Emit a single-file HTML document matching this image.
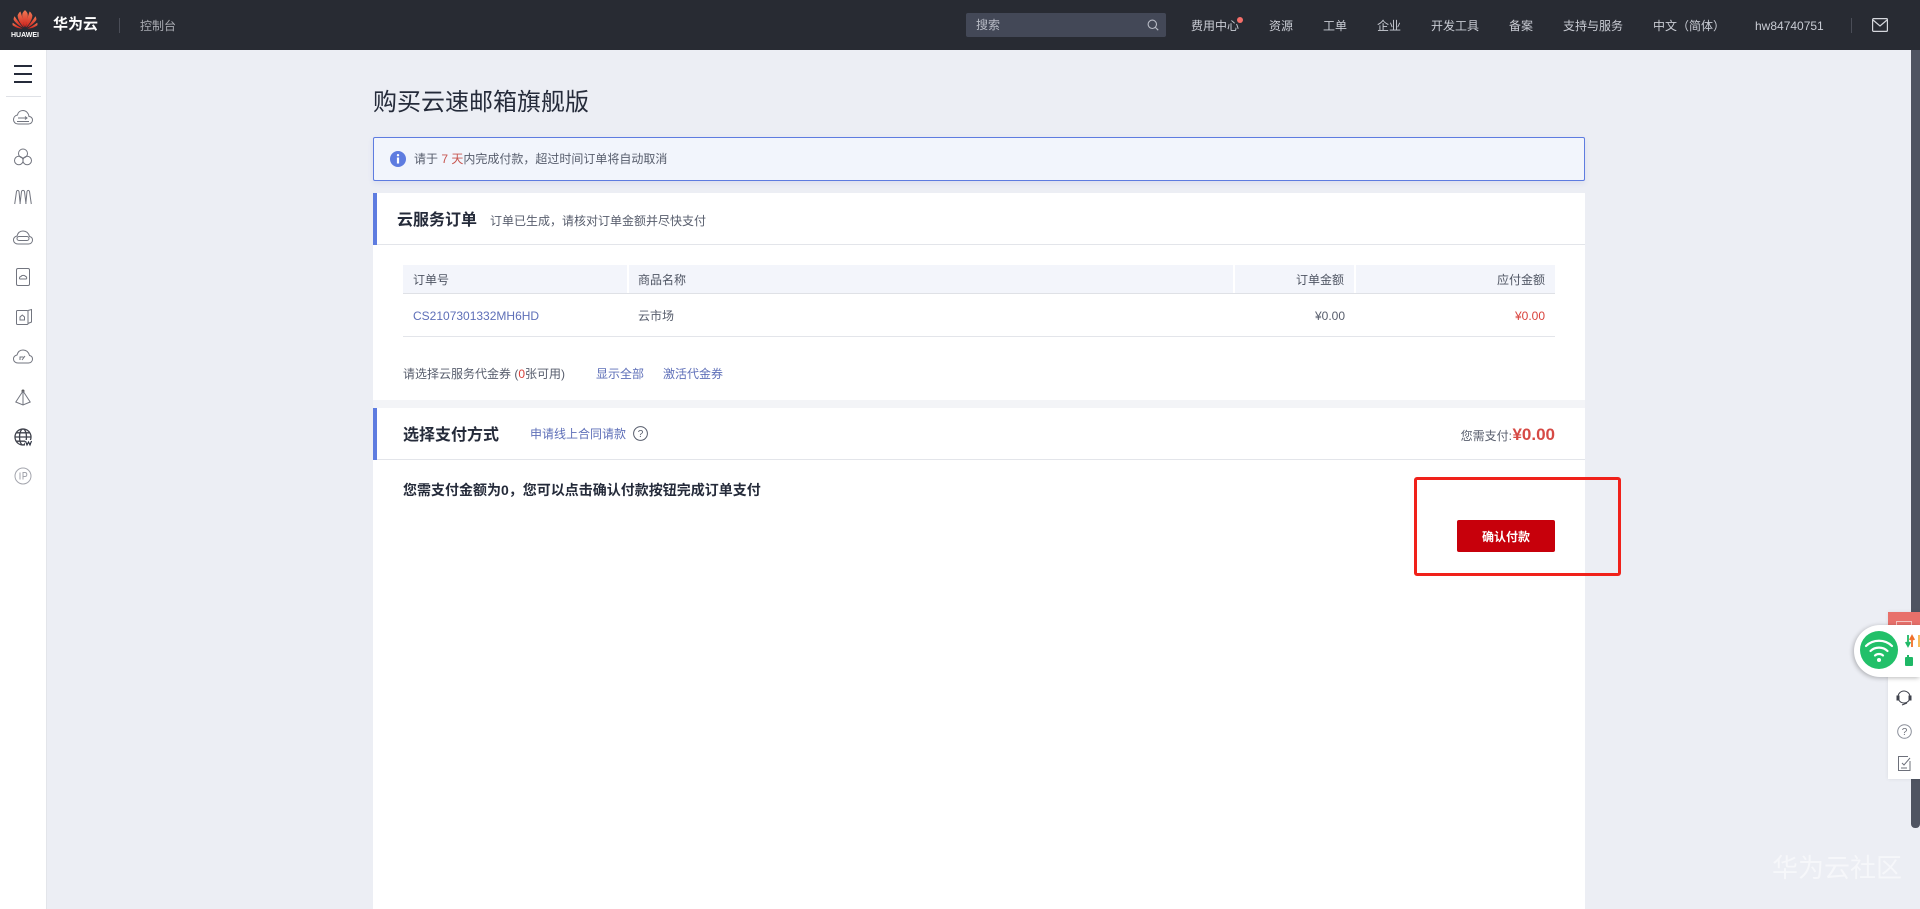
<!DOCTYPE html>
<html lang="zh-CN">
<head>
<meta charset="utf-8">
<title>购买云速邮箱旗舰版</title>
<style>
*{box-sizing:border-box;margin:0;padding:0}
html,body{width:1920px;height:909px;overflow:hidden;background:#eceef4}
body{position:relative;font-family:"Liberation Sans","Noto Sans CJK SC",sans-serif;font-size:12px;color:#252b3a}
.a{position:absolute;white-space:nowrap}
.c{line-height:20px;height:20px}
.nav{position:absolute;top:16px;line-height:20px;color:#c9ccd4;font-size:12px;white-space:nowrap}
.link{color:#5e6fb8}
svg{position:absolute;overflow:visible}
.ic{fill:none;stroke:#72757f;stroke-width:1}
</style>
</head>
<body>
<!-- header -->
<div class="a" style="left:0;top:0;width:1920px;height:50px;background:#282b33"></div>
<svg style="left:12px;top:9px" width="26" height="21" viewBox="0 0 26 21">
<defs><linearGradient id="g" x1="0" y1="0" x2="0" y2="1"><stop offset="0" stop-color="#f07a55"/><stop offset="1" stop-color="#cf1f1a"/></linearGradient></defs>
<g fill="url(#g)">
<path d="M13 18.500C11 14 9.600 8.500 10.400 4.500 11.200 2.600 12.300 1.600 13 1.200 13.700 1.600 14.800 2.600 15.600 4.500 16.400 8.500 15 14 13 18.500Z"/>
<path d="M12 18.500C8.500 15 5.800 10.500 5.600 6.500 6.300 4.600 7.400 3 8.400 2.500 10 6.500 11.500 13 12 18.500Z"/>
<path d="M14 18.500C17.500 15 20.200 10.500 20.400 6.500 19.700 4.600 18.600 3 17.600 2.500 16 6.500 14.500 13 14 18.500Z"/>
<path d="M11 18.800C7.500 17 3.500 14.200 1.600 10.800 1.500 9.400 2 8 2.600 7.200 5 11 8.500 15.500 11 18.800Z"/>
<path d="M15 18.800C18.500 17 22.500 14.200 24.400 10.800 24.500 9.400 24 8 23.400 7.200 21 11 17.500 15.500 15 18.800Z"/>
<path d="M10.500 19.600C7 19.400 3.300 18.400.6 16.200.4 15.400.5 14.400.8 13.800 3.800 16 7.500 18.200 10.500 19.600Z"/>
<path d="M15.500 19.600C19 19.400 22.700 18.400 25.400 16.200 25.600 15.400 25.500 14.400 25.200 13.800 22.200 16 18.500 18.200 15.500 19.600Z"/>
</g>
</svg>
<div class="a" style="left:11px;top:31px;width:28px;text-align:center;color:#fff;font-size:7px;line-height:9px;font-weight:bold">HUAWEI</div>
<div class="a" style="left:53px;top:14px;color:#fff;font-size:15px;line-height:22px;font-weight:bold">华为云</div>
<div class="a" style="left:119px;top:18px;width:1px;height:15px;background:#4a4d57"></div>
<div class="a" style="left:140px;top:16px;color:#a9abb2;font-size:12px;line-height:20px">控制台</div>
<div class="a" style="left:966px;top:13px;width:200px;height:24px;background:#434857;border-radius:2px"></div>
<div class="a" style="left:976px;top:15px;color:#b9bcc6;font-size:12px;line-height:20px">搜索</div>
<svg style="left:1147px;top:19px" width="12" height="12" viewBox="0 0 12 12" fill="none" stroke="#b9bcc6" stroke-width="1.1"><circle cx="5.300" cy="5.300" r="4.200"/><path d="M8.400 8.400 11.200 11.200"/></svg>
<div class="nav" style="left:1191px">费用中心</div>
<div class="a" style="left:1237px;top:17px;width:6px;height:6px;border-radius:50%;background:#f66f6a"></div>
<div class="nav" style="left:1269px">资源</div>
<div class="nav" style="left:1323px">工单</div>
<div class="nav" style="left:1377px">企业</div>
<div class="nav" style="left:1431px">开发工具</div>
<div class="nav" style="left:1509px">备案</div>
<div class="nav" style="left:1563px">支持与服务</div>
<div class="nav" style="left:1653px">中文（简体）</div>
<div class="nav" style="left:1755px">hw84740751</div>
<div class="a" style="left:1851px;top:18px;width:1px;height:15px;background:#4a4d57"></div>
<svg style="left:1872px;top:18px" width="16" height="14" viewBox="0 0 16 14" fill="none" stroke="#d5d7dd" stroke-width="1.2"><rect x=".6" y=".6" width="14.800" height="12.800" rx="1"/><path d="M1 2 8 8 15 2"/></svg>

<!-- sidebar -->
<div class="a" style="left:0;top:50px;width:47px;height:859px;background:#fff;border-right:1px solid #e3e5ea"></div>
<div class="a" style="left:14px;top:65px;width:18px;height:2px;background:#252b3a"></div>
<div class="a" style="left:14px;top:73px;width:18px;height:2px;background:#252b3a"></div>
<div class="a" style="left:14px;top:81px;width:18px;height:2px;background:#252b3a"></div>
<div class="a" style="left:6px;top:96px;width:35px;height:1px;background:#dfe1e6"></div>
<svg style="left:13px;top:109px" width="20" height="16" viewBox="0 0 20 16"><path class="ic" d="M5 15H15.500C18 15 19.500 13 19.500 11 19.500 9 18 7.500 16 7.500 15.500 4 13 1.500 10 1.500 7 1.500 5 3.500 4.500 6 2 6.500.5 8.500.5 10.700.5 13 2.500 15 5 15Z"/><path class="ic" d="M5 9H14M12 7.500 14 9 12 10.500M4 12.500H16"/></svg>
<svg style="left:14px;top:148px" width="18" height="18" viewBox="0 0 18 18"><g class="ic"><circle cx="9" cy="5.500" r="4.500"/><circle cx="4.800" cy="12.500" r="4.300"/><circle cx="13.200" cy="12.500" r="4.300"/></g></svg>
<svg style="left:14px;top:189px" width="18" height="16" viewBox="0 0 18 16"><path class="ic" d="M.7 15 2.500 2.500C3 1 4.500 1 5 2.500L6.200 15M6 15 7.500 2.500C8 1 10 1 10.500 2.500L12 15M11.800 15 13 2.500C13.500 1 15 1 15.500 2.500L17.300 15"/></svg>
<svg style="left:13px;top:230px" width="20" height="15" viewBox="0 0 20 15"><path class="ic" d="M5 14H15.500C18 14 19.500 12.200 19.500 10 19.500 8 18 6.800 16.500 6.500 15.500 3 13 1 10 1 7 1 4.800 3 4 6 2 6.500.5 8 .5 10 .5 12.300 2.500 14 5 14Z"/><rect class="ic" x="4" y="6.500" width="12" height="4" rx="2"/></svg>
<svg style="left:16px;top:268px" width="14" height="18" viewBox="0 0 14 18"><rect class="ic" x=".5" y=".5" width="13" height="17" rx="1.500"/><path class="ic" d="M4 11H10C11 11 11 8.500 9.500 8.500 9 7 5.500 7 5 8.500 3.500 8.500 3 11 4 11Z"/></svg>
<svg style="left:16px;top:309px" width="16" height="16" viewBox="0 0 16 16"><path class="ic" d="M12 1.500 15.500.5V13L12 14.500"/><rect class="ic" x=".5" y="1.500" width="11.500" height="14" rx="1"/><path class="ic" d="M4 11H8.500V8L6.300 6 4 8Z"/></svg>
<svg style="left:13px;top:349px" width="20" height="15" viewBox="0 0 20 15"><path class="ic" d="M5 14H15.500C18 14 19.500 12.200 19.500 10 19.500 8 18 6.800 16.500 6.500 15.500 3 13 1 10 1 7 1 4.800 3 4 6 2 6.500.5 8 .5 10 .5 12.300 2.500 14 5 14Z"/><path class="ic" d="M7 11V8H10.500M9 11 12 7"/></svg>
<svg style="left:15px;top:389px" width="16" height="17" viewBox="0 0 16 17"><circle cx="8" cy="2" r="1.500" fill="#555"/><path class="ic" d="M8 2 .8 13 8 16 15.200 13ZM8 2V16"/></svg>
<svg style="left:14px;top:428px" width="18" height="18" viewBox="0 0 18 18"><g fill="none" stroke="#3f424c" stroke-width="1.300"><circle cx="9" cy="9" r="8"/><ellipse cx="9" cy="9" rx="3.500" ry="8"/><path d="M1 9H17M2.500 4.800H15.500M2.500 13.200H15.500"/></g><rect x="11" y="12" width="7" height="6" fill="#fff"/><path d="M11.500 13 13 17 14.500 14 16 17 17.500 13" fill="none" stroke="#252b3a" stroke-width="1.100"/></svg>
<svg style="left:14px;top:467px" width="18" height="18" viewBox="0 0 18 18"><circle class="ic" style="stroke:#a3a5ad" cx="9" cy="9" r="8"/><path class="ic" style="stroke:#a3a5ad" d="M6 5.500V12.500M9 12.500V5.500H11C13.400 5.500 13.400 9.500 11 9.500H9"/></svg>

<!-- title -->
<div class="a" style="left:373px;top:85px;font-size:24px;line-height:36px;color:#252b3a">购买云速邮箱旗舰版</div>

<!-- alert -->
<div class="a" style="left:373px;top:137px;width:1212px;height:44px;background:#f2f5fc;border:1px solid #5e7ce0;border-radius:2px;box-shadow:0 2px 6px rgba(90,110,200,.12)"></div>
<svg style="left:390px;top:151px" width="16" height="16" viewBox="0 0 16 16"><circle cx="8" cy="8" r="8" fill="#5e7ce0"/><circle cx="8" cy="4.200" r="1.200" fill="#fff"/><rect x="6.900" y="6.500" width="2.200" height="6" fill="#fff"/></svg>
<div class="a c" style="left:414px;top:149px;color:#575d6c">请于 <span style="color:#c7554f">7 天</span>内完成付款，超过时间订单将自动取消</div>

<!-- main card -->
<div class="a" style="left:373px;top:193px;width:1212px;height:716px;background:#fff"></div>
<div class="a" style="left:373px;top:193px;width:4px;height:52px;background:#5e7ce0"></div>
<div class="a" style="left:377px;top:244px;width:1208px;height:1px;background:#e3e5ea"></div>
<div class="a" style="left:397px;top:209px;font-size:16px;line-height:24px;font-weight:bold;color:#252b3a">云服务订单</div>
<div class="a c" style="left:490px;top:211px;color:#575d6c">订单已生成，请核对订单金额并尽快支付</div>

<!-- table -->
<div class="a" style="left:403px;top:265px;width:1152px;height:29px;background:#f3f5fb;border-bottom:1px solid #dfe1e6"></div>
<div class="a" style="left:627px;top:265px;width:2px;height:28px;background:#fff"></div>
<div class="a" style="left:1233px;top:265px;width:2px;height:28px;background:#fff"></div>
<div class="a" style="left:1354px;top:265px;width:2px;height:28px;background:#fff"></div>
<div class="a c" style="left:413px;top:270px;color:#4f5563">订单号</div>
<div class="a c" style="left:638px;top:270px;color:#4f5563">商品名称</div>
<div class="a c" style="right:576px;top:270px;color:#4f5563">订单金额</div>
<div class="a c" style="right:375px;top:270px;color:#4f5563">应付金额</div>
<div class="a c link" style="left:413px;top:306px">CS2107301332MH6HD</div>
<div class="a c" style="left:638px;top:306px;color:#575d6c">云市场</div>
<div class="a c" style="right:575px;top:306px;color:#575d6c">¥0.00</div>
<div class="a c" style="right:375px;top:306px;color:#d9423c">¥0.00</div>
<div class="a" style="left:403px;top:336px;width:1152px;height:1px;background:#e3e5ea"></div>

<div class="a c" style="left:403px;top:364px;color:#575d6c">请选择云服务代金券 (<span style="color:#d9423c">0</span>张可用)</div>
<div class="a c link" style="left:596px;top:364px">显示全部</div>
<div class="a c link" style="left:663px;top:364px">激活代金券</div>

<!-- gap -->
<div class="a" style="left:373px;top:400px;width:1212px;height:8px;background:#f3f4f7"></div>

<!-- payment section -->
<div class="a" style="left:373px;top:408px;width:4px;height:52px;background:#5e7ce0"></div>
<div class="a" style="left:377px;top:459px;width:1208px;height:1px;background:#e3e5ea"></div>
<div class="a" style="left:403px;top:424px;font-size:16px;line-height:24px;font-weight:bold;color:#252b3a">选择支付方式</div>
<div class="a c link" style="left:530px;top:424px">申请线上合同请款</div>
<svg style="left:633px;top:426px" width="15" height="15" viewBox="0 0 15 15"><circle cx="7.500" cy="7.500" r="6.900" fill="none" stroke="#575d6c"/><text x="7.500" y="11" text-anchor="middle" font-size="10" font-family="Liberation Sans" fill="#575d6c">?</text></svg>
<div class="a c" style="right:408px;top:426px;color:#575d6c">您需支付:</div>
<div class="a" style="right:365px;top:422px;font-size:17px;line-height:26px;font-weight:bold;color:#d64a45">¥0.00</div>
<div class="a" style="left:403px;top:479px;font-size:14px;line-height:22px;font-weight:bold;color:#252b3a">您需支付金额为0，您可以点击确认付款按钮完成订单支付</div>

<!-- button -->
<div class="a" style="left:1457px;top:520px;width:98px;height:32px;background:#c7000b;border-radius:2px;color:#fff;font-size:12px;font-weight:bold;line-height:34px;text-align:center">确认付款</div>
<div class="a" style="left:1414px;top:477px;width:207px;height:99px;border:3px solid #f0211a;border-radius:3px"></div>

<!-- scrollbar -->
<div class="a" style="left:1911px;top:50px;width:9px;height:778px;background:#4f5461;border-radius:0 0 4px 4px"></div>

<!-- float panel (overlays scrollbar) -->
<div class="a" style="left:1888px;top:612px;width:32px;height:167px;background:#fff;box-shadow:0 0 4px rgba(0,0,0,.08)"></div>
<div class="a" style="left:1888px;top:612px;width:32px;height:32px;background:#e8706a"></div>
<svg style="left:1896px;top:621px" width="16" height="12" viewBox="0 0 16 12"><rect x=".5" y=".5" width="15" height="11" fill="none" stroke="#f5c5c2"/></svg>
<svg style="left:1895px;top:689px" width="18" height="18" viewBox="0 0 18 18" fill="none" stroke="#3f424c"><circle cx="9" cy="8" r="6"/><path d="M2 7H4V11H2ZM14 7H16V11H14Z" fill="#3f424c"/><path d="M12 14 7 16"/></svg>
<svg style="left:1897px;top:724px" width="15" height="15" viewBox="0 0 15 15"><circle cx="7.500" cy="7.500" r="6.800" fill="none" stroke="#8a8e99"/><text x="7.500" y="11" text-anchor="middle" font-size="10" font-family="Liberation Sans" fill="#6d707a">?</text></svg>
<svg style="left:1898px;top:756px" width="13" height="15" viewBox="0 0 13 15" fill="none" stroke="#6d707a"><path d="M10 .5H.5V14.500H12V5"/><path d="M4 7 6 9 12 2M3 12H9"/></svg>

<!-- wifi pill -->
<div class="a" style="left:1854px;top:625px;width:66px;height:52px;background:#fff;border-radius:26px 0 0 26px;box-shadow:-1px 1px 5px rgba(0,0,0,.28)"></div>
<svg style="left:1860px;top:631px" width="38" height="38" viewBox="0 0 38 38"><circle cx="19" cy="19" r="19" fill="#22c069"/><g fill="none" stroke="#fff" stroke-width="2.200" stroke-linecap="round"><path d="M6 15C13 8 25 8 32 15"/><path d="M10.500 20C15 15.500 23 15.500 27.500 20"/><path d="M15 24.500C17 22.500 21 22.500 23 24.500"/></g><circle cx="19" cy="29" r="2" fill="#fff"/></svg>
<svg style="left:1905px;top:635px" width="15" height="12" viewBox="0 0 15 12"><path d="M3 0V9M.8 7 3 11 5.200 7" fill="none" stroke="#1fb866" stroke-width="1.800"/><path d="M7 12V3M4.800 5 7 1 9.200 5" fill="none" stroke="#f0702a" stroke-width="1.800"/><path d="M14 0V12" stroke="#f5a623" stroke-width="1.500"/></svg>
<div class="a" style="left:1905px;top:657px;width:8px;height:9px;background:#1fb866;border-radius:1px"></div>
<div class="a" style="left:1907px;top:655px;width:2px;height:2px;background:#1fb866"></div>

<!-- watermark -->
<div class="a" style="left:1772px;top:850px;font-size:26px;line-height:36px;color:rgba(255,255,255,.5)">华为云社区</div>
</body>
</html>
